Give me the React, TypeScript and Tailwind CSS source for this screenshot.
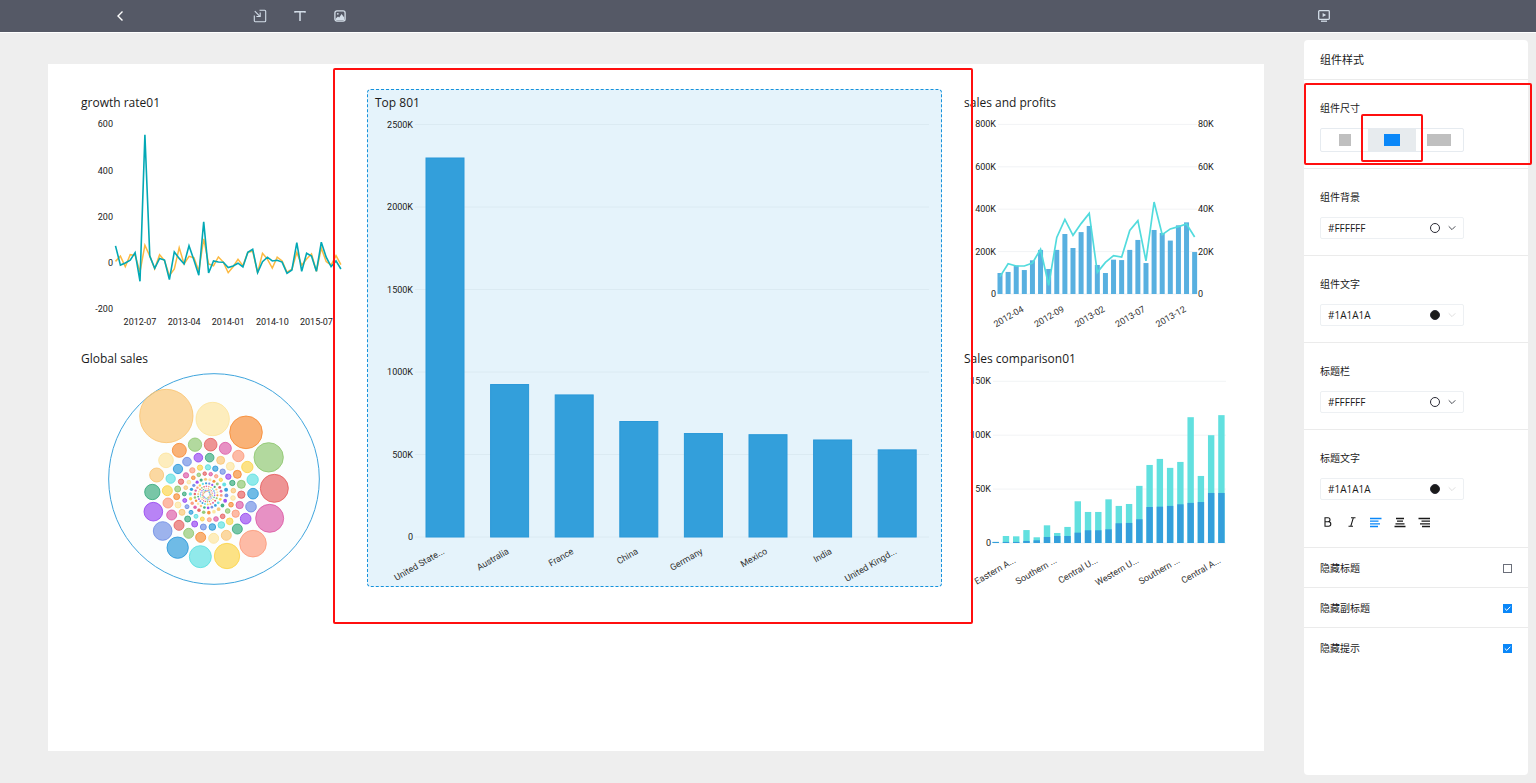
import { useState } from "react";
import type { ReactNode } from "react";

const GRID = "#e3e7ea";

const growthSales = [
  74, -9, 0, 12, 45, -79, 555, 30, -23, 20, 13, -72, 48, 20, -4, 75, 13, -53, 178, -43, 9, 4, 3, -20,
  -13, -1, -17, 46, 59, -42, 6, 25, 9, 12, 4, -45, -30, 88, -36, 42, 30, -36, 90, 25, -16, 9, -26,
];
const growthProfit = [
  7, 30, -16, 36, 33, -38, 77, 30, -25, 36, 10, -55, -26, 66, -4, 29, 23, -35, 104, -4, -12, 26, 4,
  -42, -16, 16, -12, 46, 51, -42, 42, 17, -22, 25, 9, -40, -27, 46, -10, 17, 39, -36, 64, 6, -9, 32,
  -7,
];
const growthMonths = ["2012-07", "2013-04", "2014-01", "2014-10", "2015-07"];

const topCountries = [
  { name: "United State...", value: 2297 },
  { name: "Australia", value: 924 },
  { name: "France", value: 861 },
  { name: "China", value: 700 },
  { name: "Germany", value: 627 },
  { name: "Mexico", value: 620 },
  { name: "India", value: 588 },
  { name: "United Kingd...", value: 528 },
];

const monthlySales = [
  99, 104, 134, 113, 159, 208, 118, 208, 283, 217, 292, 321, 137, 99, 162, 160, 208, 255, 146, 302,
  288, 252, 324, 338, 198,
];
const monthlyProfit = [
  8.2, 14.3, 13.2, 13.2, 14.6, 21.1, 4.1, 26.7, 35.2, 27.7, 33.2, 38, 10.2, 14.9, 18.1, 17.4, 30,
  34.6, 15.6, 43.4, 28, 30.7, 31.8, 33, 26.9,
];
const salesMonths = ["2012-04", "2012-09", "2013-02", "2013-07", "2013-12"];

const regionTotal = [
  1, 6.5, 6.2, 12, 5.3, 16.4, 9.3, 14.9, 38.7, 28.8, 28.8, 40.5, 34.4, 36.2, 53, 72.4, 78, 69.7,
  75.2, 116.7, 62.2, 100, 118.6,
];
const regionBase = [
  1, 1, 1, 1.9, 2.5, 5.6, 6.5, 6.5, 9.6, 11.8, 11.8, 12.7, 18.3, 18.6, 22, 33.4, 33.7, 34.4, 35.9,
  37.2, 38, 46.4, 46.4,
];
const regionNames = [
  "Eastern A...",
  "Southern ...",
  "Central U...",
  "Western U...",
  "Southern ...",
  "Central A...",
];

const bubbleColors = [
  "#fac36f", "#fde49a", "#f7882e", "#8bc56a", "#e65a5a", "#dc56a4", "#fd9777", "#fcd343", "#56dfe0",
  "#2496d9", "#6a8ae4", "#9440f0", "#31a878",
];

// x, y, radius, largest first
const bigBubbles = [
  [289, 228, 81], [428, 237, 51], [528, 277, 50], [596, 352, 45], [613, 445, 43], [599, 535, 43],
  [549, 611, 41], [471, 648, 39], [391, 650, 34], [323, 623, 33], [278, 573, 29], [250, 515, 29],
  [247, 456, 24], [260, 405, 22], [288, 361, 23], [328, 331, 22], [375, 314, 21], [422, 314, 20],
  [466, 325, 19], [505, 348, 18], [532, 381, 18], [548, 419, 18], [549, 461, 17], [543, 500, 17],
  [527, 536, 17], [502, 567, 16], [469, 586, 16], [431, 595, 16], [392, 592, 16], [356, 580, 16],
  [327, 556, 16], [305, 525, 16], [294, 489, 16], [292, 452, 16], [302, 416, 15], [324, 387, 15],
  [351, 365, 14], [385, 353, 14], [419, 353, 14], [452, 361, 13], [481, 379, 13], [502, 403, 13],
  [514, 433, 13], [514, 464, 12], [509, 495, 12], [497, 521, 12], [479, 544, 11], [454, 555, 11],
  [427, 561, 11], [400, 561, 10], [374, 552, 10], [353, 537, 10], [336, 517, 10], [324, 495, 10],
  [320, 470, 10], [323, 447, 10], [333, 425, 9], [348, 406, 9], [367, 391, 9], [390, 383, 9],
  [414, 382, 9], [436, 386, 9], [458, 395, 9], [475, 410, 9], [487, 429, 9], [490, 452, 8],
  [489, 474, 8], [483, 494, 8], [473, 513, 8], [458, 529, 8], [438, 537, 8], [418, 539, 7],
  [397, 537, 7], [378, 529, 7], [363, 517, 7],
];

// the tail of the series winds into the middle
const smallBubbles = Array.from({ length: 150 }, (_, i) => {
  const distance = 70 * Math.pow(0.986, i);
  const angle = ((149 + i * 16.4) * Math.PI) / 180;
  return [411 + distance * Math.cos(angle), 464 + distance * Math.sin(angle), distance * 0.1];
});

const bubbles = [...bigBubbles, ...smallBubbles];

const toPoints = (values: number[], x: (i: number) => number, y: (v: number) => number) =>
  values.map((v, i) => `${x(i)},${y(v)}`).join(" ");

const AxisLabel = ({
  x,
  y,
  anchor = "end",
  children,
}: {
  x: number;
  y: number;
  anchor?: "start" | "middle" | "end";
  children: ReactNode;
}) => (
  <text x={x} y={y + 3} textAnchor={anchor} className="fill-[#1a1a1a] font-[Roboto,sans-serif] text-[9px]">
    {children}
  </text>
);

const SlantedLabel = ({ x, y, children }: { x: number; y: number; children: ReactNode }) => (
  <text
    transform={`translate(${x} ${y}) rotate(-30)`}
    textAnchor="end"
    className="fill-[#333333] font-[Roboto,sans-serif] text-[9px]"
  >
    {children}
  </text>
);

const GrowthChart = () => {
  const x = (i: number) => 42.5 + i * 4.9;
  const y = (v: number) => 148 - v * 0.231;
  return (
    <svg viewBox="0 0 280 216" className="block w-full overflow-visible" role="img" aria-label="growth rate01">
      {[600, 400, 200, 0, -200].map((v) => (
        <AxisLabel key={v} x={40} y={y(v)}>
          {v}
        </AxisLabel>
      ))}
      {growthMonths.map((m, i) => (
        <AxisLabel key={m} x={x(5 + i * 9)} y={207} anchor="middle">
          {m}
        </AxisLabel>
      ))}
      <polyline points={toPoints(growthProfit, x, y)} fill="none" stroke="#fcb941" strokeWidth="1.5" />
      <polyline points={toPoints(growthSales, x, y)} fill="none" stroke="#02a8b5" strokeWidth="1.6" />
    </svg>
  );
};

const BubbleChart = () => (
  <svg viewBox="9 93 840 648" className="block w-full" role="img" aria-label="Global sales">
    <circle cx="432" cy="417" r="316" fill="#fcfefe" stroke="#3fa5dd" strokeWidth="3" />
    {bubbles.map(([cx, cy, r], i) => (
      <circle
        key={i}
        cx={cx}
        cy={cy}
        r={r > 6 ? r - 1 : Math.max(r, 1.6)}
        fill={bubbleColors[i % bubbleColors.length]}
        fillOpacity={r > 6 ? 0.65 : 0.9}
        stroke={r > 6 ? bubbleColors[i % bubbleColors.length] : "none"}
        strokeOpacity="0.8"
        strokeWidth="3"
      />
    ))}
  </svg>
);

const TopChart = () => {
  const x = (i: number) => 78 + i * 64.6;
  const y = (v: number) => 422 - v * 0.165;
  return (
    <svg viewBox="0 0 575 472" className="block w-full" role="img" aria-label="Top 801">
      {[2500, 2000, 1500, 1000, 500, 0].map((v) => (
        <g key={v}>
          <line x1={48} x2={562} y1={y(v)} y2={y(v)} stroke="#dbeaf2" strokeWidth="1" />
          <AxisLabel x={46} y={y(v)}>
            {v === 0 ? "0" : `${v}K`}
          </AxisLabel>
        </g>
      ))}
      {topCountries.map((c, i) => (
        <g key={c.name}>
          <rect
            x={x(i) - 19}
            y={y(c.value)}
            width={38}
            height={422 - y(c.value)}
            fill="#339fdb"
            stroke="#2a98d8"
          />
          <SlantedLabel x={x(i)} y={438}>
            {c.name}
          </SlantedLabel>
        </g>
      ))}
    </svg>
  );
};

const SalesChart = () => {
  const x = (i: number) => 44 + i * 8.11;
  const y = (v: number) => 179 - v * 0.212;
  return (
    <svg viewBox="0 0 281 216" className="block w-full" role="img" aria-label="sales and profits">
      {[800, 600, 400, 200, 0].map((v) => (
        <g key={v}>
          <line x1={42} x2={241} y1={y(v)} y2={y(v)} stroke={GRID} strokeWidth="0.5" />
          <AxisLabel x={40} y={y(v)}>
            {v === 0 ? "0" : `${v}K`}
          </AxisLabel>
          <AxisLabel x={242} y={y(v)} anchor="start">
            {v === 0 ? "0" : `${v / 10}K`}
          </AxisLabel>
        </g>
      ))}
      {monthlySales.map((v, i) => (
        <rect key={i} x={x(i) - 2.5} y={y(v)} width={5} height={179 - y(v)} fill="#58b0e0" />
      ))}
      <polyline
        points={toPoints(monthlyProfit, x, (v) => y(v * 10))}
        fill="none"
        stroke="#52dbdd"
        strokeWidth="1.7"
      />
      {salesMonths.map((m, i) => (
        <SlantedLabel key={m} x={x(3 + i * 5)} y={196}>
          {m}
        </SlantedLabel>
      ))}
    </svg>
  );
};

const ComparisonChart = () => {
  const x = (i: number) => 39.7 + i * 10.26;
  const y = (v: number) => 172 - v * 1.078;
  return (
    <svg viewBox="0 0 281 216" className="block w-full" role="img" aria-label="Sales comparison01">
      {[150, 100, 50, 0].map((v) => (
        <g key={v}>
          <line x1={37} x2={270} y1={y(v)} y2={y(v)} stroke={GRID} strokeWidth="0.5" />
          <AxisLabel x={35} y={y(v)}>
            {v === 0 ? "0" : `${v}K`}
          </AxisLabel>
        </g>
      ))}
      {regionTotal.map((v, i) => (
        <g key={i}>
          <rect x={x(i) - 3.2} y={y(v)} width={6.4} height={172 - y(v)} fill="#62e0df" />
          <rect
            x={x(i) - 3.2}
            y={y(regionBase[i])}
            width={6.4}
            height={172 - y(regionBase[i])}
            fill="#349fdb"
          />
        </g>
      ))}
      {regionNames.map((name, i) => (
        <SlantedLabel key={i} x={x(2 + i * 4)} y={191}>
          {name}
        </SlantedLabel>
      ))}
    </svg>
  );
};

const Card = ({ title, children }: { title: string; children: ReactNode }) => (
  <article>
    <h2 className="h-[26px] pl-2 text-[12px] leading-7 whitespace-nowrap">{title}</h2>
    {children}
  </article>
);

const Toolbar = () => (
  <header className="flex h-[33px] items-center justify-between border-b border-white bg-[#555966] pr-[200px] pl-[108px] text-[#d3dde8]">
    <div className="flex items-center">
      <button type="button" aria-label="Back" className="flex size-6 items-center justify-center text-white">
        <svg viewBox="0 0 12 12" className="size-3" fill="none" stroke="currentColor" strokeWidth="1.4">
          <path d="M8.5 1.5 4 6l4.5 4.5" />
        </svg>
      </button>
      <div className="ml-[116px] flex gap-4">
        <button type="button" aria-label="Insert component" className="flex size-6 items-center justify-center">
          <svg viewBox="0 0 14 14" className="size-3.5" fill="none" stroke="currentColor" strokeWidth="1.1">
            <path d="M6.5 1.3h5.2a1 1 0 0 1 1 1v9.4a1 1 0 0 1-1 1H2.3a1 1 0 0 1-1-1V6.5" />
            <path d="M1.8 2.2 6.4 6.8M7.2 3.6v3.9H3.4" />
          </svg>
        </button>
        <button type="button" aria-label="Insert text" className="flex size-6 items-center justify-center">
          <svg viewBox="0 0 12 12" className="size-3" fill="none" stroke="currentColor" strokeWidth="1.5">
            <path d="M1 2.8V1.7h10v1.1M6 1.7V11" />
          </svg>
        </button>
        <button type="button" aria-label="Insert image" className="flex size-6 items-center justify-center">
          <svg viewBox="0 0 12 12" className="size-3" fill="none" stroke="currentColor" strokeWidth="1.3">
            <rect x="0.9" y="0.9" width="10.2" height="10.2" rx="2" />
            <circle cx="3.8" cy="3.8" r="0.9" fill="currentColor" stroke="none" />
            <path d="M1.8 10.2V8.4L4 6.4l1.2 1L7.6 4l2.6 3.4v2.8z" fill="currentColor" stroke="none" />
          </svg>
        </button>
      </div>
    </div>
    <button type="button" aria-label="Preview" className="flex size-6 items-center justify-center">
      <svg viewBox="0 0 12 12" className="size-3" fill="none" stroke="currentColor" strokeWidth="1.3">
        <rect x="0.7" y="0.7" width="10.6" height="8.6" rx="0.8" />
        <path d="M4.6 3v4l3.6-2z" fill="currentColor" stroke="none" />
        <path d="M3 11.2h6" />
      </svg>
    </button>
  </header>
);

const Section = ({ label, children }: { label: string; children: ReactNode }) => (
  <section className="border-b border-[#ebebeb] px-4 pt-[18px] pb-4">
    <h3 className="mb-2.5 text-[10px] leading-5">{label}</h3>
    {children}
  </section>
);

const ColorField = ({ label, value }: { label: string; value: string }) => {
  const [color, setColor] = useState(value);
  const isDark = color !== "#FFFFFF";
  return (
    <div className="flex h-[22px] w-36 items-center rounded-xs border border-[#edf0f3]">
      <input
        type="text"
        aria-label={label}
        value={color}
        onChange={(e) => setColor(e.target.value)}
        className="min-w-0 flex-1 pl-[7px] text-[10px] leading-5 outline-none"
      />
      <button type="button" aria-label={`${label} ${color}`} className="flex items-center gap-2 pr-[7px]">
        <span
          className="size-2.5 rounded-full border border-[#2a2a35]"
          style={{ backgroundColor: color }}
        />
        <svg
          viewBox="0 0 8 8"
          className={isDark ? "size-2 text-[#dedede]" : "size-2 text-[#4a4d55]"}
          fill="none"
          stroke="currentColor"
        >
          <path d="M0.7 2.3 4 5.6l3.3-3.3" />
        </svg>
      </button>
    </div>
  );
};

const sizes = [
  { name: "small", block: "h-3 w-3" },
  { name: "medium", block: "h-3 w-4" },
  { name: "large", block: "h-3 w-6" },
];

const SizePicker = () => {
  const [size, setSize] = useState("medium");
  return (
    <div className="flex h-6 w-36 rounded-xs border border-[#e6ebf0]">
      {sizes.map(({ name, block }) => (
        <button
          key={name}
          type="button"
          aria-label={name}
          aria-pressed={size === name}
          onClick={() => setSize(name)}
          className={`flex flex-1 items-center justify-center ${size === name ? "bg-[#e7ebee]" : ""}`}
        >
          <span className={`${block} ${size === name ? "bg-[#0a87f8]" : "bg-[#bfbfbf]"}`} />
        </button>
      ))}
    </div>
  );
};

const alignIcons = [
  { name: "left", path: "M0 1.5h11.5M0 4.2h8.5M0 6.8h10M0 9.5h8" },
  { name: "center", path: "M2 1.5h8M3 4.2h6M1.5 6.8h9M0.5 9.5h11" },
  { name: "right", path: "M0.5 1.5H12M3.5 4.2H12M2 6.8h10M4 9.5h8" },
];

const TextTools = () => {
  const [align, setAlign] = useState("left");
  return (
    <div className="mt-2.5 -mb-[3px] -ml-1 flex text-[#1a1a1a]">
      <button type="button" aria-label="Bold" className="flex size-6 items-center justify-center">
        <svg viewBox="0 0 10 10" className="size-2.5" fill="none" stroke="currentColor" strokeWidth="1.1">
          <path d="M2 0.8h3a1.9 1.9 0 0 1 0 4H2zM2 4.8h3.6a2.1 2.1 0 0 1 0 4.4H2z" />
        </svg>
      </button>
      <button type="button" aria-label="Italic" className="flex size-6 items-center justify-center">
        <svg viewBox="0 0 10 10" className="size-2.5" fill="none" stroke="currentColor" strokeWidth="1.1">
          <path d="M4 0.8h4.5M1.5 9.2H6M6.3 0.8 3.8 9.2" />
        </svg>
      </button>
      {alignIcons.map(({ name, path }) => (
        <button
          key={name}
          type="button"
          aria-label={`Align ${name}`}
          aria-pressed={align === name}
          onClick={() => setAlign(name)}
          className={`flex size-6 items-center justify-center ${align === name ? "text-[#0a87f8]" : ""}`}
        >
          <svg viewBox="0 0 12 11" className="h-[11px] w-3" fill="none" stroke="currentColor" strokeWidth="1.3">
            <path d={path} />
          </svg>
        </button>
      ))}
    </div>
  );
};

const ToggleRow = ({
  label,
  defaultChecked = false,
  last = false,
}: {
  label: string;
  defaultChecked?: boolean;
  last?: boolean;
}) => (
  <label
    className={`flex h-10 items-center justify-between border-b px-4 pt-px text-[10px] ${
      last ? "border-transparent" : "border-[#ebebeb]"
    }`}
  >
    {label}
    <span className="grid place-items-center">
      <input
        type="checkbox"
        defaultChecked={defaultChecked}
        className="peer col-start-1 row-start-1 size-[9px] appearance-none border border-[#6b6f7a] checked:border-[#0a87f8] checked:bg-[#0a87f8]"
      />
      <svg
        viewBox="0 0 9 9"
        className="pointer-events-none invisible col-start-1 row-start-1 size-[9px] peer-checked:visible"
        fill="none"
        stroke="white"
      >
        <path d="M1.8 4.5 3.8 6.4 7.3 2.7" />
      </svg>
    </span>
  </label>
);

const StylePanel = () => (
  <aside className="m-2 mt-[7px] w-56 shrink-0 rounded-sm bg-white">
    <h2 className="h-10 border-b border-[#ebebeb] px-4 text-[11px] leading-10">组件样式</h2>
    <div className="relative">
      <Section label="组件尺寸">
        <div className="relative">
          <SizePicker />
          <div className="pointer-events-none absolute -top-3.5 left-[41px] h-12 w-[62px] rounded-xs border-2 border-[#ff0f0f]" />
        </div>
      </Section>
      <div className="pointer-events-none absolute top-[3px] -right-1 bottom-1 left-0 rounded-xs border-2 border-[#ff0f0f]" />
    </div>
    <Section label="组件背景">
      <ColorField label="组件背景" value="#FFFFFF" />
    </Section>
    <Section label="组件文字">
      <ColorField label="组件文字" value="#1A1A1A" />
    </Section>
    <Section label="标题栏">
      <ColorField label="标题栏" value="#FFFFFF" />
    </Section>
    <Section label="标题文字">
      <ColorField label="标题文字" value="#1A1A1A" />
      <TextTools />
    </Section>
    <ToggleRow label="隐藏标题" />
    <ToggleRow label="隐藏副标题" defaultChecked />
    <ToggleRow label="隐藏提示" defaultChecked last />
  </aside>
);

export const App = () => {
  return (
    <div className="flex min-h-screen flex-col bg-[#eeeeee] font-['Open_Sans','Noto_Sans_CJK_SC',sans-serif] text-[#1a1a1a]">
      <Toolbar />
      <div className="flex flex-1">
        <main className="mt-[31px] mr-8 mb-8 ml-12 min-w-0 flex-1 bg-white pt-[25px] pr-[27px] pl-[25px]">
          <div className="grid grid-cols-[280fr_575fr_281fr] items-start gap-x-3.5">
            <div className="flex flex-col gap-3.5">
              <Card title="growth rate01">
                <GrowthChart />
              </Card>
              <Card title="Global sales">
                <BubbleChart />
              </Card>
            </div>
            <div className="relative z-10">
              <div className="rounded-sm bg-[#e5f3fb] outline-1 -outline-offset-1 outline-[#1592dc] outline-dashed">
                <Card title="Top 801">
                  <TopChart />
                </Card>
              </div>
              <div className="pointer-events-none absolute -top-[21px] -right-[31px] -bottom-[37px] -left-[34px] rounded-xs border-2 border-[#ff0f0f]" />
            </div>
            <div className="flex flex-col gap-3.5">
              <Card title="sales and profits">
                <SalesChart />
              </Card>
              <Card title="Sales comparison01">
                <ComparisonChart />
              </Card>
            </div>
          </div>
        </main>
        <StylePanel />
      </div>
    </div>
  );
};

export default App;
